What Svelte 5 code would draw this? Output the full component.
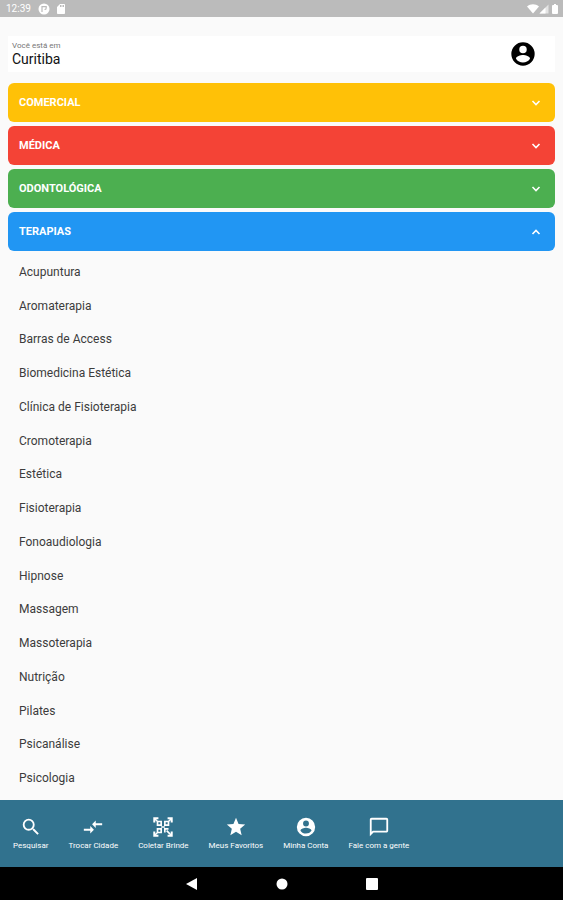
<script>
  let open = $state('TERAPIAS');

  const therapies = [
    'Acupuntura', 'Aromaterapia', 'Barras de Access', 'Biomedicina Estética',
    'Clínica de Fisioterapia', 'Cromoterapia', 'Estética', 'Fisioterapia',
    'Fonoaudiologia', 'Hipnose', 'Massagem', 'Massoterapia', 'Nutrição',
    'Pilates', 'Psicanálise', 'Psicologia'
  ];

  const groups = [
    { name: 'COMERCIAL', tone: 'amber', items: [] },
    { name: 'MÉDICA', tone: 'red', items: [] },
    { name: 'ODONTOLÓGICA', tone: 'green', items: [] },
    { name: 'TERAPIAS', tone: 'blue', items: therapies }
  ];

  const account = 'M12 2a10 10 0 1 0 0 20 10 10 0 0 0 0-20zm0 3a3.2 3.2 0 1 1 0 6.400 3.200 3.200 0 0 1 0-6.400zm0 14.200a7.200 7.200 0 0 1-6-3.220c.030-1.990 4-3.080 6-3.080s5.970 1.090 6 3.080a7.200 7.200 0 0 1-6 3.220z';

  const tabs = [
    { label: 'Pesquisar', d: 'M15.500 14h-.79l-.28-.27A6.470 6.470 0 0 0 16 9.500 6.500 6.500 0 1 0 9.500 16c1.610 0 3.090-.59 4.230-1.570l.27.28v.79l5 4.990L20.490 19l-4.990-5zm-6 0a4.500 4.500 0 1 1 0-9 4.500 4.500 0 0 1 0 9z' },
    { label: 'Trocar Cidade', d: 'M9.010 14H2v2h7.010v3L13 15l-3.990-4v3zm5.980-1v-3H22V8h-7.010V5L11 9l3.990 4z' },
    { label: 'Coletar Brinde', qr: true },
    { label: 'Meus Favoritos', d: 'M12 17.270 18.180 21l-1.640-7.030L22 9.240l-7.190-.61L12 2 9.190 8.630 2 9.240l5.460 4.730L5.820 21z' },
    { label: 'Minha Conta', d: account },
    { label: 'Fale com a gente', d: 'M20 2H4c-1.100 0-2 .9-2 2v18l4-4h14c1.100 0 2-.9 2-2V4c0-1.100-.9-2-2-2zm0 14H5.200L4 17.200V4h16v12z' }
  ];
</script>

<div class="screen">
  <div class="status">
    <span>12:39</span>
    <svg class="app" viewBox="0 0 12 12" width="12" height="12" aria-hidden="true">
      <circle cx="6" cy="6" r="5.500" fill="#fff" />
      <path d="M4 9V3.700h4.200v1.200c0 1-.7 1.600-1.700 1.600" fill="none" stroke="#bbb" stroke-width="1.200" />
    </svg>
    <svg viewBox="0 0 24 24" width="12" height="12" aria-hidden="true">
      <path d="M18 2h-8L4 8v12c0 1.100.9 2 2 2h12c1.100 0 2-.9 2-2V4c0-1.100-.9-2-2-2zM12 8h-2V4h2v4zm3 0h-2V4h2v4zm3 0h-2V4h2v4z" fill="#fff" />
    </svg>
    <div class="signals">
      <svg viewBox="0 0 12 10" width="12" height="10" aria-hidden="true"><path d="M0 2.500C3.500-.5 8.500-.5 12 2.500L6 9.500z" fill="#fff" /></svg>
      <svg viewBox="0 0 10 10" width="10" height="10" aria-hidden="true">
        <path d="M9.500.5v9H.5z" fill="#fff" opacity=".6" /><path d="M6.500 3.500v6h-6z" fill="#fff" />
      </svg>
      <svg class="battery" viewBox="0 0 6 10" width="6" height="10" aria-hidden="true"><path d="M2 0h2v1h1q1 0 1 1v7q0 1-1 1H1q-1 0-1-1V2q0-1 1-1h1z" fill="#fff" /></svg>
    </div>
  </div>

  <header>
    <div class="place">
      <small>Você está em</small>
      <strong>Curitiba</strong>
    </div>
    <button class="profile" aria-label="Minha conta">
      <svg viewBox="0 0 24 24" width="28" height="28" aria-hidden="true"><path d={account} fill="#000" /></svg>
    </button>
  </header>

  <main>
    {#each groups as group}
      <button
        class="group {group.tone}"
        aria-expanded={open === group.name}
        onclick={() => (open = open === group.name ? '' : group.name)}
      >
        <span>{group.name}</span>
        <svg class:up={open === group.name} viewBox="0 0 10 10" width="10" height="10" aria-hidden="true">
          <path d="M1.500 3 5 6.500 8.500 3" fill="none" stroke="#fff" stroke-width="1.600" />
        </svg>
      </button>
      {#if open === group.name && group.items.length}
        <ul>
          {#each group.items as item}
            <li><a href="#top">{item}</a></li>
          {/each}
        </ul>
      {/if}
    {/each}
  </main>

  <nav class="tabs">
    {#each tabs as tab}
      <button>
        {#if tab.qr}
          <svg viewBox="0 0 24 24" width="22" height="22" aria-hidden="true" fill="none" stroke="#fff" stroke-width="1.800">
            <path d="M2.500 7V2.500H7M17 2.500h4.500V7M21.500 17v4.500H17M7 21.500H2.500V17" stroke-width="2.200" />
            <path d="M6 6h4v4H6zM14 6h4v4h-4zM6 14h4v4H6zM14 18v-4h4M16 16l3 3M3 3l3 3M21 3l-3 3M3 21l3-3M18 18l3 3M10 12h4" />
          </svg>
        {:else}
          <svg viewBox="0 0 24 24" width="22" height="22" aria-hidden="true"><path d={tab.d} fill="#fff" /></svg>
        {/if}
        <span>{tab.label}</span>
      </button>
    {/each}
  </nav>

  <div class="system">
    <button aria-label="Voltar"><svg viewBox="0 0 12 12" width="12" height="12"><path d="M11 0v12L0 6z" fill="#fff" /></svg></button>
    <button aria-label="Início"><svg viewBox="0 0 12 12" width="12" height="12"><circle cx="6" cy="6" r="5.500" fill="#fff" /></svg></button>
    <button aria-label="Recentes"><svg viewBox="0 0 12 12" width="12" height="12"><rect width="12" height="12" rx="1" fill="#fff" /></svg></button>
  </div>
</div>

<style>
  :global(body) { margin: 0; }
  .screen {
    min-height: 100vh;
    display: flex;
    flex-direction: column;
    background: #fafafa;
    color: #3c3c3c;
    font-family: Roboto, sans-serif;
  }
  svg { display: block; flex: none; }
  button {
    margin: 0;
    padding: 0;
    border: 0;
    background: none;
    color: inherit;
    font-family: inherit;
    cursor: pointer;
  }
  .status {
    display: flex;
    align-items: center;
    gap: 5px;
    height: 17px;
    padding: 0 5px 0 6px;
    background: #bbb;
    color: #fff;
    font-size: 10px;
    line-height: 17px;
  }
  .app { margin-left: 2px; }
  .signals { display: flex; margin-left: auto; }
  .battery { margin-left: 3px; }
  header {
    display: flex;
    align-items: center;
    justify-content: space-between;
    height: 36px;
    margin: 19px 8px 0;
    padding: 0 18px 0 4px;
    background: #fff;
  }
  .place { display: flex; flex-direction: column; }
  .place small { color: #777; font-size: 8px; line-height: 10px; }
  .place strong { color: #111; font-size: 14px; font-weight: 400; line-height: 16px; }
  main {
    flex: 1;
    display: flex;
    flex-direction: column;
    gap: 4px;
    padding: 11px 8px 5px;
  }
  .group {
    display: flex;
    align-items: center;
    justify-content: space-between;
    height: 39px;
    padding: 0 14px 0 11px;
    border-radius: 6px;
    color: #fff;
    font-size: 11px;
    font-weight: 700;
  }
  .amber { background: #ffc107; }
  .red { background: #f44336; }
  .green { background: #4caf50; }
  .blue { background: #2196f3; }
  .up { transform: rotate(180deg); }
  ul {
    flex: 1;
    display: flex;
    flex-direction: column;
    margin: 0;
    padding: 0;
    list-style: none;
  }
  li { flex: 1; display: flex; align-items: center; padding: 0 11px; }
  li a { color: inherit; font-size: 12px; line-height: 16px; text-decoration: none; }
  .tabs {
    display: flex;
    align-items: center;
    gap: 20px;
    height: 67px;
    padding: 0 13px;
    background: #31728e;
    color: #fff;
  }
  .tabs button {
    display: flex;
    flex-direction: column;
    align-items: center;
    gap: 3px;
    font-size: 8px;
    line-height: 10px;
    white-space: nowrap;
  }
  .system {
    display: flex;
    align-items: center;
    justify-content: center;
    gap: 78px;
    height: 33px;
    background: #000;
  }
</style>
